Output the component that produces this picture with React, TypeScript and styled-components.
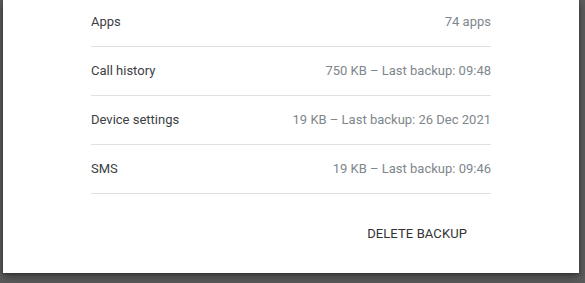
import React from "react";
import styled, { createGlobalStyle } from "styled-components";

const GlobalStyle = createGlobalStyle`
  html, body {
    margin: 0;
    padding: 0;
    background: #5c5c5c;
    font-family: Roboto, "Liberation Sans", Arial, sans-serif;
    overflow: hidden;
  }
`;

const Page = styled.div`
  width: 585px;
  height: 283px;
  padding: 0 6px 0 3px;
  box-sizing: border-box;
`;

const Card = styled.div`
  background: #ffffff;
  height: 273px;
  box-sizing: border-box;
  padding: 0 88px 0 88px;
  display: flex;
  flex-direction: column;
  box-shadow: 0 4px 10px rgba(0, 0, 0, 0.35), 0 1px 3px rgba(0, 0, 0, 0.3);
`;

const List = styled.div`
  margin-top: -2px;
  display: flex;
  flex-direction: column;
`;

const Row = styled.div`
  height: 49px;
  box-sizing: border-box;
  padding-bottom: 1px;
  display: flex;
  align-items: center;
  justify-content: space-between;
  border-bottom: 1px solid #e0e0e0;
  font-size: 13px;
  line-height: 18px;
`;

const Label = styled.span`
  color: #3c4043;
`;

const Detail = styled.span`
  color: #80868b;
`;

const Actions = styled.div`
  display: flex;
  justify-content: flex-end;
  margin-top: 21px;
`;

const TextButton = styled.button`
  height: 36px;
  padding: 0 24px;
  border: none;
  background: transparent;
  font-family: Roboto, "Liberation Sans", Arial, sans-serif;
  font-size: 13px;
  font-weight: 400;
  color: #333333;
  letter-spacing: 0.1px;
  cursor: pointer;
`;

const items = [
  { label: "Apps", detail: "74 apps" },
  { label: "Call history", detail: "750 KB – Last backup: 09:48" },
  { label: "Device settings", detail: "19 KB – Last backup: 26 Dec 2021" },
  { label: "SMS", detail: "19 KB – Last backup: 09:46" },
];

export default function App() {
  return (
    <>
      <GlobalStyle />
      <Page>
        <Card>
          <List>
            {items.map((item) => (
              <Row key={item.label}>
                <Label>{item.label}</Label>
                <Detail>{item.detail}</Detail>
              </Row>
            ))}
          </List>
          <Actions>
            <TextButton>DELETE BACKUP</TextButton>
          </Actions>
        </Card>
      </Page>
    </>
  );
}
